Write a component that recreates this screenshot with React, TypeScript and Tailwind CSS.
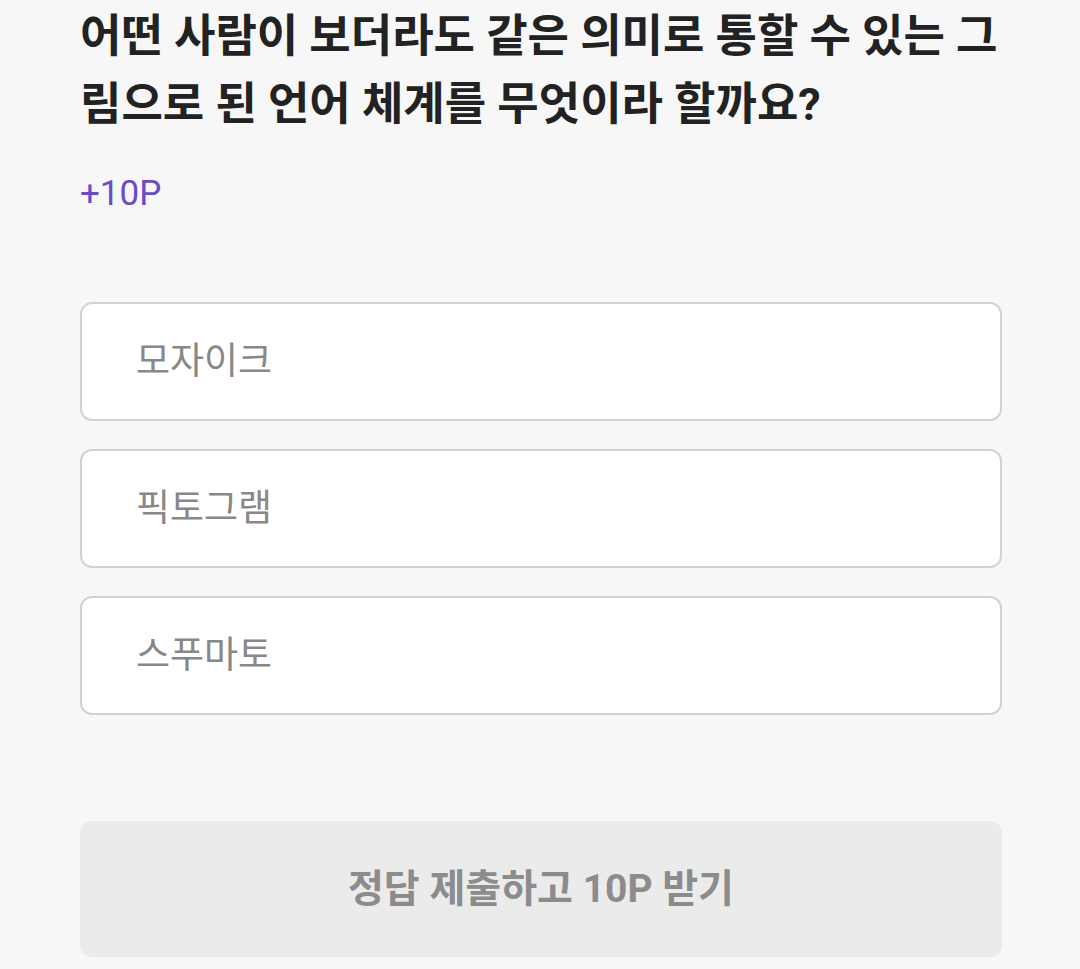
import React from 'react';

const options = ['모자이크', '픽토그램', '스푸마토'];

export default function App() {
  return (
    <div
      className="min-h-screen bg-[#f7f7f7] px-[80px] pt-[3px]"
      style={{ fontFamily: 'Roboto, "Noto Sans CJK KR", sans-serif' }}
    >
      <h1 className="w-[922px] text-[45px] font-bold leading-[68px] text-[#222222] break-all">
        어떤 사람이 보더라도 같은 의미로 통할 수 있는 그림으로 된 언어 체계를 무엇이라 할까요?
      </h1>
      <p className="mt-[35px] text-[35px] leading-[40px] text-[#6a4bc8]">+10P</p>

      <div className="mt-[88px] flex w-[922px] flex-col gap-[28px]">
        {options.map((o) => (
          <button
            key={o}
            className="flex h-[119px] items-center rounded-[12px] border-2 border-[#d2d2d2] bg-white pl-[54px] text-[37px] text-[#888888]"
          >
            {o}
          </button>
        ))}
      </div>

      <button className="mt-[106px] flex h-[136px] w-[922px] items-center justify-center rounded-[12px] bg-[#ebebeb] text-[39px] font-bold text-[#8c8c8c]">
        정답 제출하고 10P 받기
      </button>
    </div>
  );
}
